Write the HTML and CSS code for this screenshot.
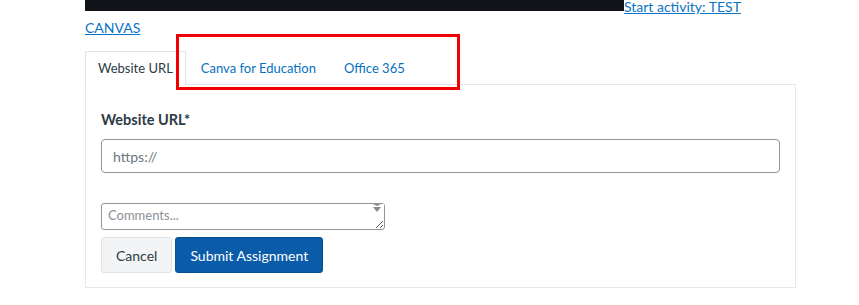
FILE: index.html
```html
<!DOCTYPE html>
<html lang="en">
<head>
    <meta charset="UTF-8">
    <meta name="viewport" content="width=device-width, initial-scale=1.0">
    <title>Submit Assignment</title>
    <link rel="stylesheet" href="styles.css">
</head>
<body>
    <div class="page">
        <div class="activity-line">
            <span class="redacted"></span><a href="#" class="activity-link">Start activity: TEST CANVAS</a>
        </div>

        <div class="submit-box">
            <ul class="tabs">
                <li class="tab active">Website URL</li>
                <li class="tab">Canva for Education</li>
                <li class="tab">Office 365</li>
            </ul>
            <div class="highlight"></div>

            <div class="tab-panel">
                <label class="field-label" for="url">Website URL*</label>
                <input type="text" id="url" class="url-input" placeholder="https://">

                <div class="comments-wrap">
                    <textarea class="comments" rows="1" placeholder="Comments..."></textarea>
                    <span class="scroll-bar"><span class="scroll-arrow"></span></span>
                </div>

                <div class="buttons">
                    <button class="btn btn-cancel">Cancel</button>
                    <button class="btn btn-primary">Submit Assignment</button>
                </div>
            </div>
        </div>
    </div>
</body>
</html>
```

FILE: styles.css
```css
body {
    margin: 0;
    font-family: Lato, "Open Sans", sans-serif;
    font-size: 14px;
    color: #2d3b45;
    background-color: white;
}

.page {
    padding-left: 85px;
    width: 711px;
}

.activity-line {
    line-height: 21px;
    margin-top: -4px;
}

.redacted {
    display: inline-block;
    width: 539px;
    height: 15px;
    background-color: #101318;
    vertical-align: top;
}

.activity-link {
    color: #0b74c5;
    text-decoration: underline;
}

.submit-box {
    position: relative;
    margin-top: 13px;
}

.tabs {
    display: flex;
    list-style: none;
    margin: 0;
    padding: 0;
}

.tab {
    padding: 0 12px;
    height: 32px;
    line-height: 32px;
    font-size: 13px;
    color: #0770c0;
    border: 1px solid transparent;
    border-bottom: none;
    margin-right: 2px;
}

.tab.active {
    color: #2d3b45;
    border-color: #e2e4e6;
    background-color: white;
    position: relative;
    z-index: 1;
    margin-bottom: -1px;
    height: 33px;
}

.highlight {
    position: absolute;
    left: 91px;
    top: -17px;
    width: 278px;
    height: 50px;
    border: 3px solid #f00000;
    z-index: 2;
}

.tab-panel {
    border: 1px solid #e6e8ea;
    padding: 26px 15px 14px 15px;
}

.field-label {
    display: block;
    font-weight: bold;
    font-size: 14.5px;
    line-height: 18px;
}

.url-input {
    display: block;
    box-sizing: border-box;
    width: 100%;
    height: 34px;
    margin-top: 10px;
    padding: 0 11px;
    border: 1px solid #8d959f;
    border-radius: 4px;
    font-family: Lato, "Open Sans", sans-serif;
    font-size: 14px;
    color: #2d3b45;
}

.url-input::placeholder {
    color: #6b7780;
}

.comments-wrap {
    position: relative;
    width: 284px;
    margin-top: 30px;
    height: 27px;
}

.comments {
    box-sizing: border-box;
    width: 284px;
    height: 27px;
    padding: 3px 6px;
    border: 1px solid #8d959f;
    border-radius: 3px;
    font-family: Lato, "Open Sans", sans-serif;
    font-size: 13px;
    display: block;
    resize: vertical;
}

.comments::placeholder {
    color: #8b9097;
}

.scroll-bar {
    position: absolute;
    right: 1px;
    top: 1px;
    width: 14px;
    height: 8px;
    background-color: white;
}

.scroll-arrow {
    position: absolute;
    left: 3px;
    top: 0;
    width: 0;
    height: 0;
    border-top: 2px solid #8a8a8a;
    border-left: 4px solid transparent;
    border-right: 4px solid transparent;
}

.scroll-arrow::after {
    content: "";
    position: absolute;
    left: -4px;
    top: 1px;
    border-left: 4px solid transparent;
    border-right: 4px solid transparent;
    border-top: 5px solid #8a8a8a;
}

.buttons {
    display: flex;
    gap: 3px;
    margin-top: 7px;
}

.btn {
    height: 36px;
    border-radius: 3px;
    font-family: Lato, "Open Sans", sans-serif;
    font-size: 14px;
    padding: 0 14px;
    cursor: pointer;
}

.btn-cancel {
    background-color: #f3f4f5;
    border: 1px solid #e0e3e5;
    color: #2d3b45;
}

.btn-primary {
    background-color: #0b5ca8;
    border: 1px solid #07508f;
    color: white;
}
```
